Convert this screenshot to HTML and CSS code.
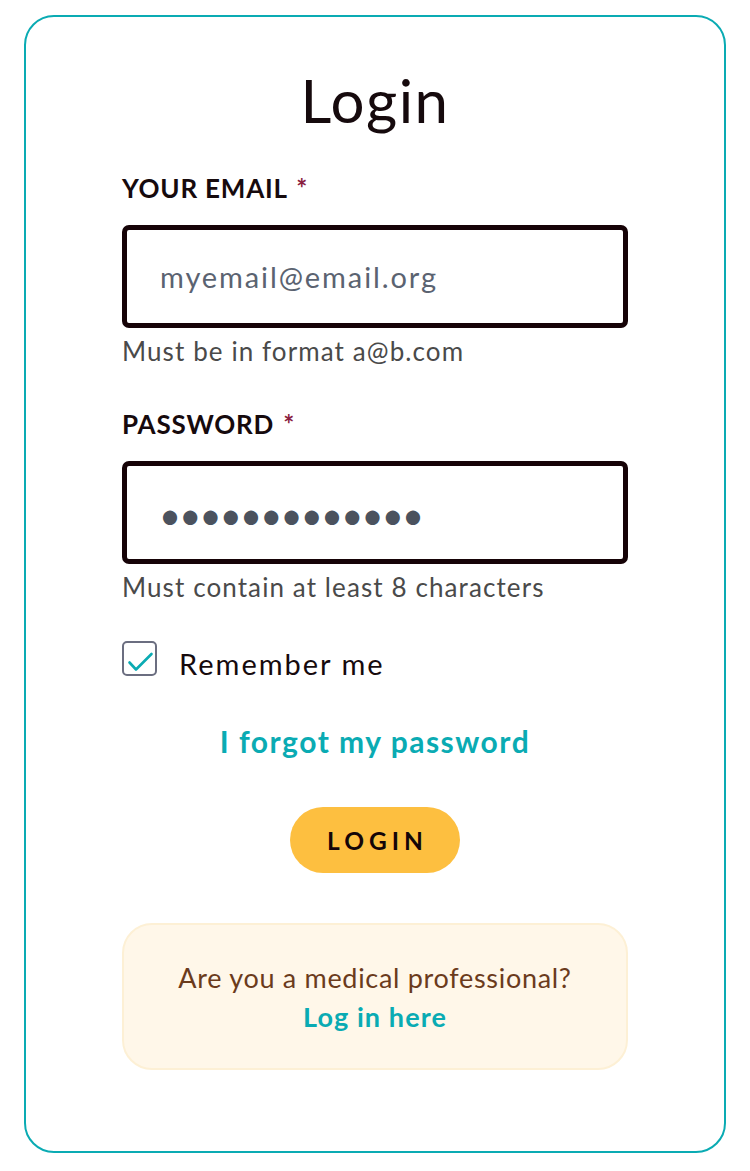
FILE: index.html
```html
<!DOCTYPE html>
<html lang="en">
<head>
  <meta charset="UTF-8" />
  <title>Login</title>
  <link rel="stylesheet" href="styles.css">
</head>
<body>
  <div class="login-card">
    <h1>Login</h1>

    <form class="login-form" onsubmit="return false;">
      <label class="field-label" for="email">YOUR EMAIL <span class="req">*</span></label>
      <input class="field-input" id="email" type="email" placeholder="myemail@email.org">
      <p class="field-hint">Must be in format a@b.com</p>

      <label class="field-label second" for="password">PASSWORD <span class="req">*</span></label>
      <input class="field-input password" id="password" type="password" value="abcdefghijklm">
      <p class="field-hint">Must contain at least 8 characters</p>

      <label class="remember">
        <svg class="check-box" width="35" height="35" viewBox="0 0 35 35">
          <rect x="1" y="1" width="33" height="33" rx="4" fill="white" stroke="#6b6e80" stroke-width="2"/>
          <path d="M7.5 21.5 L14 28.5 L29.5 13" fill="none" stroke="#0aabb3" stroke-width="2.6" stroke-linecap="round" stroke-linejoin="round"/>
        </svg>
        <span class="remember-text">Remember me</span>
      </label>

      <a class="forgot" href="#">I forgot my password</a>

      <div class="btn-row">
        <button class="login-btn" type="submit">LOGIN</button>
      </div>
    </form>

    <div class="pro-box">
      <p>Are you a medical professional?</p>
      <a href="#">Log in here</a>
    </div>
  </div>
</body>
</html>
```

FILE: styles.css
```css
body {
  margin: 0;
  padding: 15px 24px 18px;
  font-family: Lato, "Open Sans", sans-serif;
  background-color: white;
  color: #160a0d;
}
.login-card {
  border: 2px solid #0aabb3;
  border-radius: 30px;
  padding: 47px 96px 81px;
}
h1 {
  margin: 0;
  font-size: 60px;
  font-weight: 400;
  line-height: 72px;
  letter-spacing: 1.5px;
  text-align: center;
}
.login-form {
  display: flex;
  flex-direction: column;
  margin-top: 37px;
}
.field-label {
  font-size: 26px;
  font-weight: 700;
  line-height: 31px;
  letter-spacing: 0.8px;
  margin-bottom: 21px;
}
.field-label.second {
  margin-top: 42px;
}
.req {
  color: #8b1e3f;
  margin-left: 2px;
}
.field-input {
  box-sizing: border-box;
  height: 103px;
  border: 5px solid #160307;
  border-radius: 7px;
  padding: 0 33px;
  font-family: Lato, sans-serif;
  font-size: 29px;
  letter-spacing: 1.9px;
  color: #4b525e;
  outline: none;
}
.field-input::placeholder {
  color: #5b6371;
}
.field-input.password {
  font-size: 38px;
  letter-spacing: -1.8px;
  padding-left: 32px;
  padding-top: 2px;
}
.field-hint {
  margin: 8px 0 0;
  font-size: 26px;
  line-height: 31px;
  letter-spacing: 1.1px;
  color: #4a4a4a;
}
.remember {
  display: flex;
  align-items: flex-start;
  gap: 22px;
  margin-top: 38px;
  font-size: 29px;
  line-height: 35px;
  letter-spacing: 2px;
}
.check-box {
  flex: none;
}
.remember-text {
  margin-top: 5px;
}
.forgot {
  margin-top: 42px;
  align-self: center;
  font-size: 30px;
  font-weight: 700;
  line-height: 36px;
  letter-spacing: 1.5px;
  color: #0aabb3;
  text-decoration: none;
}
.btn-row {
  display: flex;
  justify-content: center;
  margin-top: 48px;
}
.login-btn {
  width: 170px;
  height: 66px;
  padding: 0 0 0 5px;
  border: none;
  border-radius: 33px;
  background-color: #fdbf40;
  font-family: Lato, sans-serif;
  font-size: 24.5px;
  font-weight: 700;
  letter-spacing: 5px;
  color: #140508;
  cursor: pointer;
}
.pro-box {
  margin-top: 50px;
  height: 147px;
  box-sizing: border-box;
  background-color: #fff7e9;
  border: 2px solid #fdf0d5;
  border-radius: 30px;
  display: flex;
  flex-direction: column;
  align-items: center;
  justify-content: center;
}
.pro-box p {
  margin: 0;
  font-size: 27px;
  line-height: 39px;
  letter-spacing: 0.7px;
  color: #6b3b1c;
}
.pro-box a {
  font-size: 27px;
  font-weight: 700;
  line-height: 39px;
  letter-spacing: 1.1px;
  color: #0aabb3;
  text-decoration: none;
}
```
